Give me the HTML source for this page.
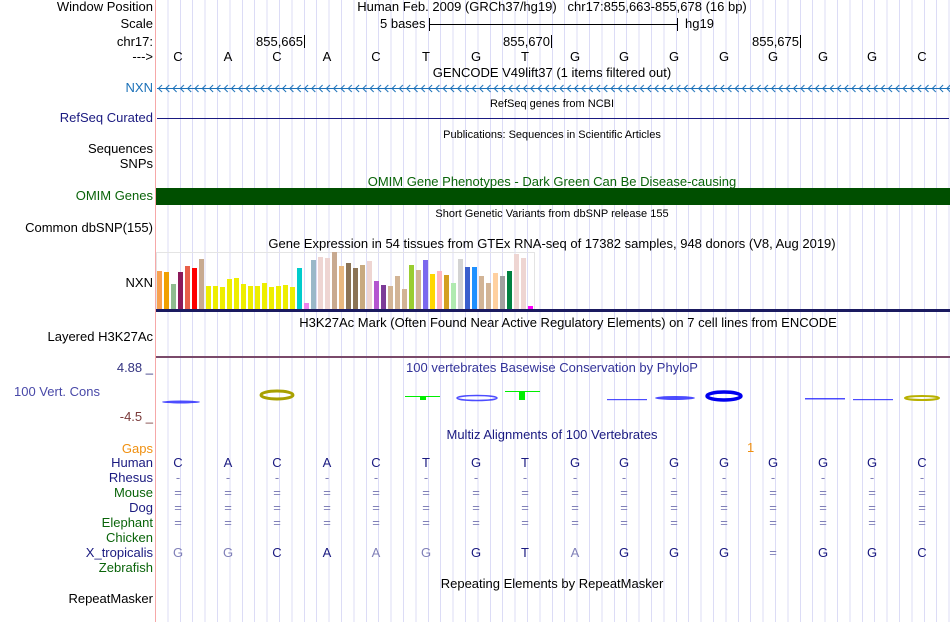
<!DOCTYPE html>
<html><head><meta charset="utf-8"><style>
*{margin:0;padding:0}
body{width:950px;height:622px;overflow:hidden;background:#fff;font-family:"Liberation Sans",sans-serif;font-size:13px;position:relative;color:#000}
#grid{position:absolute;left:156px;top:0;width:794px;height:622px;background:repeating-linear-gradient(to right,transparent 0,transparent 11.4px,#dcdcf6 11.4px,#dcdcf6 12.4px);background-position:0 0}
#lb{position:absolute;left:155px;top:0;width:1px;height:622px;background:#f6a8a8}
.l{position:absolute;right:797px;white-space:nowrap;line-height:14px}
.c{position:absolute;white-space:nowrap;transform:translateX(-50%);line-height:14px}
.a{position:absolute;white-space:nowrap;line-height:14px}
.s{font-size:11px}
.nv{color:#1a1a80}.gr{color:#0a640a}
.row span{position:absolute;transform:translateX(-50%)}
.lt{color:#8080b8}
</style></head><body>
<div id="grid"></div><div id="lb"></div>

<div class="l" style="top:0">Window Position</div>
<div class="l" style="top:17px">Scale</div>
<div class="l" style="top:35px">chr17:</div>
<div class="l" style="top:50px">---&gt;</div>
<div class="c" style="left:552px;top:0">Human Feb. 2009 (GRCh37/hg19) &nbsp; chr17:855,663-855,678 (16 bp)</div>
<div class="a" style="left:380px;top:17px">5 bases</div>
<div style="position:absolute;left:429px;top:24px;width:248px;height:1px;background:#000"></div>
<div style="position:absolute;left:429px;top:18px;width:1px;height:13px;background:#000"></div>
<div style="position:absolute;left:677px;top:18px;width:1px;height:13px;background:#000"></div>
<div class="a" style="left:685px;top:17px">hg19</div>
<div class="a" style="left:256px;top:35px">855,665</div><div style="position:absolute;left:304px;top:35px;width:1px;height:13px;background:#000"></div>
<div class="a" style="left:503px;top:35px">855,670</div><div style="position:absolute;left:551px;top:35px;width:1px;height:13px;background:#000"></div>
<div class="a" style="left:752px;top:35px">855,675</div><div style="position:absolute;left:800px;top:35px;width:1px;height:13px;background:#000"></div>

<div class="row" style="position:absolute;left:0;top:50px;line-height:14px">
<span style="left:178px">C</span><span style="left:228px">A</span><span style="left:277px">C</span><span style="left:327px">A</span><span style="left:376px">C</span><span style="left:426px">T</span><span style="left:476px">G</span><span style="left:525px">T</span><span style="left:575px">G</span><span style="left:624px">G</span><span style="left:674px">G</span><span style="left:724px">G</span><span style="left:773px">G</span><span style="left:823px">G</span><span style="left:872px">G</span><span style="left:922px">C</span></div>

<div class="c" style="left:552px;top:66px">GENCODE V49lift37 (1 items filtered out)</div>
<div class="l" style="top:81px;color:#1a70b8">NXN</div>
<svg style="position:absolute;left:157px;top:83px" width="793" height="11">
<defs><pattern id="ar" x="0" y="0" width="7.3" height="11" patternUnits="userSpaceOnUse"><path d="M5 2 L1.5 5.5 L5 9" fill="none" stroke="#1a70b8" stroke-width="1"/></pattern></defs>
<rect x="0" y="0" width="793" height="11" fill="url(#ar)"/>
<rect x="0" y="5" width="793" height="1" fill="#1a70b8"/>
</svg>

<div class="c s" style="left:552px;top:97px">RefSeq genes from NCBI</div>
<div class="l nv" style="top:111px">RefSeq Curated</div>
<div style="position:absolute;left:157px;top:118px;width:792px;height:1px;background:#1a1a80"></div>
<div class="c s" style="left:552px;top:128px">Publications: Sequences in Scientific Articles</div>
<div class="l" style="top:142px">Sequences</div>
<div class="l" style="top:157px">SNPs</div>
<div class="c gr" style="left:552px;top:175px">OMIM Gene Phenotypes - Dark Green Can Be Disease-causing</div>
<div class="l gr" style="top:189px">OMIM Genes</div>
<div style="position:absolute;left:156px;top:188px;width:794px;height:17px;background:#004f00"></div>
<div class="c s" style="left:552px;top:207px">Short Genetic Variants from dbSNP release 155</div>
<div class="l" style="top:221px">Common dbSNP(155)</div>
<div class="c" style="left:552px;top:237px">Gene Expression in 54 tissues from GTEx RNA-seq of 17382 samples, 948 donors (V8, Aug 2019)</div>
<div class="l" style="top:276px">NXN</div>
<svg style="position:absolute;left:0;top:0" width="950" height="622">
<rect x="156.5" y="252.5" width="378" height="57" fill="none" stroke="#e4e4e4"/>
<g>
<rect x="157" y="271" width="5" height="38" fill="#f8a050"/>
<rect x="164" y="272" width="5" height="37" fill="#f0a000"/>
<rect x="171" y="284" width="5" height="25" fill="#8fbc8f"/>
<rect x="178" y="272" width="5" height="37" fill="#8b1a5b"/>
<rect x="185" y="266" width="5" height="43" fill="#e8604a"/>
<rect x="192" y="268" width="5" height="41" fill="#ff0000"/>
<rect x="199" y="259" width="5" height="50" fill="#c8aa90"/>
<rect x="206" y="286" width="5" height="23" fill="#eeee00"/>
<rect x="213" y="286" width="5" height="23" fill="#eeee00"/>
<rect x="220" y="287" width="5" height="22" fill="#eeee00"/>
<rect x="227" y="279" width="5" height="30" fill="#eeee00"/>
<rect x="234" y="278" width="5" height="31" fill="#eeee00"/>
<rect x="241" y="284" width="5" height="25" fill="#eeee00"/>
<rect x="248" y="286" width="5" height="23" fill="#eeee00"/>
<rect x="255" y="286" width="5" height="23" fill="#eeee00"/>
<rect x="262" y="283" width="5" height="26" fill="#eeee00"/>
<rect x="269" y="287" width="5" height="22" fill="#eeee00"/>
<rect x="276" y="286" width="5" height="23" fill="#eeee00"/>
<rect x="283" y="285" width="5" height="24" fill="#eeee00"/>
<rect x="290" y="287" width="5" height="22" fill="#eeee00"/>
<rect x="297" y="268" width="5" height="41" fill="#00cccc"/>
<rect x="304" y="303" width="5" height="6" fill="#ee82ee"/>
<rect x="311" y="260" width="5" height="49" fill="#9ab8c8"/>
<rect x="318" y="257" width="5" height="52" fill="#eed5d2"/>
<rect x="325" y="258" width="5" height="51" fill="#eed5d2"/>
<rect x="332" y="252" width="5" height="57" fill="#c8aa90"/>
<rect x="339" y="266" width="5" height="43" fill="#e8b880"/>
<rect x="346" y="263" width="5" height="46" fill="#8b7355"/>
<rect x="353" y="268" width="5" height="41" fill="#8b7355"/>
<rect x="360" y="265" width="5" height="44" fill="#c8aa80"/>
<rect x="367" y="261" width="5" height="48" fill="#eed5d2"/>
<rect x="374" y="281" width="5" height="28" fill="#b455d0"/>
<rect x="381" y="285" width="5" height="24" fill="#7d3c98"/>
<rect x="388" y="286" width="5" height="23" fill="#d2b496"/>
<rect x="395" y="276" width="5" height="33" fill="#d2b496"/>
<rect x="402" y="289" width="5" height="20" fill="#d2b496"/>
<rect x="409" y="265" width="5" height="44" fill="#9acd32"/>
<rect x="416" y="270" width="5" height="39" fill="#d2b496"/>
<rect x="423" y="260" width="5" height="49" fill="#7b68ee"/>
<rect x="430" y="274" width="5" height="35" fill="#ffd700"/>
<rect x="437" y="271" width="5" height="38" fill="#ffb6c1"/>
<rect x="444" y="275" width="5" height="34" fill="#d4a020"/>
<rect x="451" y="283" width="5" height="26" fill="#b0eab0"/>
<rect x="458" y="259" width="5" height="50" fill="#d3d3d3"/>
<rect x="465" y="267" width="5" height="42" fill="#3a5fcd"/>
<rect x="472" y="267" width="5" height="42" fill="#1e90ff"/>
<rect x="479" y="276" width="5" height="33" fill="#d2b496"/>
<rect x="486" y="283" width="5" height="26" fill="#d2b496"/>
<rect x="493" y="273" width="5" height="36" fill="#ffd0a0"/>
<rect x="500" y="276" width="5" height="33" fill="#a0a0a0"/>
<rect x="507" y="271" width="5" height="38" fill="#008040"/>
<rect x="514" y="254" width="5" height="55" fill="#eed5d2"/>
<rect x="521" y="258" width="5" height="51" fill="#eed5d2"/>
<rect x="528" y="306" width="5" height="3" fill="#ff00ff"/>
</g>
<rect x="156" y="309" width="794" height="3" fill="#1a1a60"/>
<rect x="156" y="356" width="794" height="2" fill="#7a4a6a"/>
<g fill="#2020ff" opacity="0.8">
<ellipse cx="181" cy="402" rx="19" ry="1.5"/>
<rect x="607" y="399" width="40" height="1.2"/><ellipse cx="675" cy="398" rx="20" ry="2"/>
<rect x="805" y="398" width="40" height="1.5"/><rect x="853" y="399" width="40" height="1.2"/>
<ellipse cx="477" cy="398" rx="20" ry="2.5" fill="none" stroke="#2020ff" stroke-width="1.5"/>
</g>
<ellipse cx="277" cy="395" rx="16" ry="4" fill="none" stroke="#a8a000" stroke-width="3"/>
<ellipse cx="922" cy="398" rx="17" ry="2" fill="none" stroke="#b8b000" stroke-width="2"/>
<ellipse cx="724" cy="396" rx="17" ry="4" fill="none" stroke="#0000ee" stroke-width="3.5"/>
<rect x="405" y="396" width="35" height="1" fill="#00ee00"/><rect x="420" y="396" width="6" height="4" fill="#00ee00"/>
<rect x="505" y="391" width="35" height="1" fill="#00ee00"/><rect x="519" y="391" width="6" height="9" fill="#00ee00"/>
</svg>
<div class="c" style="left:568px;top:316px">H3K27Ac Mark (Often Found Near Active Regulatory Elements) on 7 cell lines from ENCODE</div>
<div class="l" style="top:330px">Layered H3K27Ac</div>
<div class="l" style="top:361px;color:#333380">4.88 _</div>
<div class="c" style="left:552px;top:361px;color:#333399">100 vertebrates Basewise Conservation by PhyloP</div>
<div class="a" style="left:14px;top:385px;color:#4848a8">100 Vert. Cons</div>
<div class="l" style="top:410px;color:#7a3a3a">-4.5 _</div>
<div class="c" style="left:552px;top:428px;color:#1a1a80">Multiz Alignments of 100 Vertebrates</div>
<div class="l" style="top:442px;color:#f09010">Gaps</div>
<div class="a" style="left:747px;top:441px;color:#f09010">1</div>
<div class="l nv" style="top:456px">Human</div>
<div class="l nv" style="top:471px">Rhesus</div>
<div class="l gr" style="top:486px">Mouse</div>
<div class="l nv" style="top:501px">Dog</div>
<div class="l gr" style="top:516px">Elephant</div>
<div class="l gr" style="top:531px">Chicken</div>
<div class="l nv" style="top:546px">X_tropicalis</div>
<div class="l gr" style="top:561px">Zebrafish</div>
<div class="row nv" style="position:absolute;left:0;top:456px;line-height:14px">
<span style="left:178px">C</span><span style="left:228px">A</span><span style="left:277px">C</span><span style="left:327px">A</span><span style="left:376px">C</span><span style="left:426px">T</span><span style="left:476px">G</span><span style="left:525px">T</span><span style="left:575px">G</span><span style="left:624px">G</span><span style="left:674px">G</span><span style="left:724px">G</span><span style="left:773px">G</span><span style="left:823px">G</span><span style="left:872px">G</span><span style="left:922px">C</span></div>
<div class="row lt" style="position:absolute;left:0;top:471px;line-height:14px">
<span style="left:178px">-</span><span style="left:228px">-</span><span style="left:277px">-</span><span style="left:327px">-</span><span style="left:376px">-</span><span style="left:426px">-</span><span style="left:476px">-</span><span style="left:525px">-</span><span style="left:575px">-</span><span style="left:624px">-</span><span style="left:674px">-</span><span style="left:724px">-</span><span style="left:773px">-</span><span style="left:823px">-</span><span style="left:872px">-</span><span style="left:922px">-</span></div>
<div class="row lt" style="position:absolute;left:0;top:486px;line-height:14px">
<span style="left:178px">=</span><span style="left:228px">=</span><span style="left:277px">=</span><span style="left:327px">=</span><span style="left:376px">=</span><span style="left:426px">=</span><span style="left:476px">=</span><span style="left:525px">=</span><span style="left:575px">=</span><span style="left:624px">=</span><span style="left:674px">=</span><span style="left:724px">=</span><span style="left:773px">=</span><span style="left:823px">=</span><span style="left:872px">=</span><span style="left:922px">=</span></div>
<div class="row lt" style="position:absolute;left:0;top:501px;line-height:14px">
<span style="left:178px">=</span><span style="left:228px">=</span><span style="left:277px">=</span><span style="left:327px">=</span><span style="left:376px">=</span><span style="left:426px">=</span><span style="left:476px">=</span><span style="left:525px">=</span><span style="left:575px">=</span><span style="left:624px">=</span><span style="left:674px">=</span><span style="left:724px">=</span><span style="left:773px">=</span><span style="left:823px">=</span><span style="left:872px">=</span><span style="left:922px">=</span></div>
<div class="row lt" style="position:absolute;left:0;top:516px;line-height:14px">
<span style="left:178px">=</span><span style="left:228px">=</span><span style="left:277px">=</span><span style="left:327px">=</span><span style="left:376px">=</span><span style="left:426px">=</span><span style="left:476px">=</span><span style="left:525px">=</span><span style="left:575px">=</span><span style="left:624px">=</span><span style="left:674px">=</span><span style="left:724px">=</span><span style="left:773px">=</span><span style="left:823px">=</span><span style="left:872px">=</span><span style="left:922px">=</span></div>
<div class="row nv" style="position:absolute;left:0;top:546px;line-height:14px">
<span class="lt" style="left:178px">G</span><span class="lt" style="left:228px">G</span><span style="left:277px">C</span><span style="left:327px">A</span><span class="lt" style="left:376px">A</span><span class="lt" style="left:426px">G</span><span style="left:476px">G</span><span style="left:525px">T</span><span class="lt" style="left:575px">A</span><span style="left:624px">G</span><span style="left:674px">G</span><span style="left:724px">G</span><span class="lt" style="left:773px">=</span><span style="left:823px">G</span><span style="left:872px">G</span><span style="left:922px">C</span></div>
<div class="c" style="left:552px;top:577px">Repeating Elements by RepeatMasker</div>
<div class="l" style="top:592px">RepeatMasker</div>
</body></html>
